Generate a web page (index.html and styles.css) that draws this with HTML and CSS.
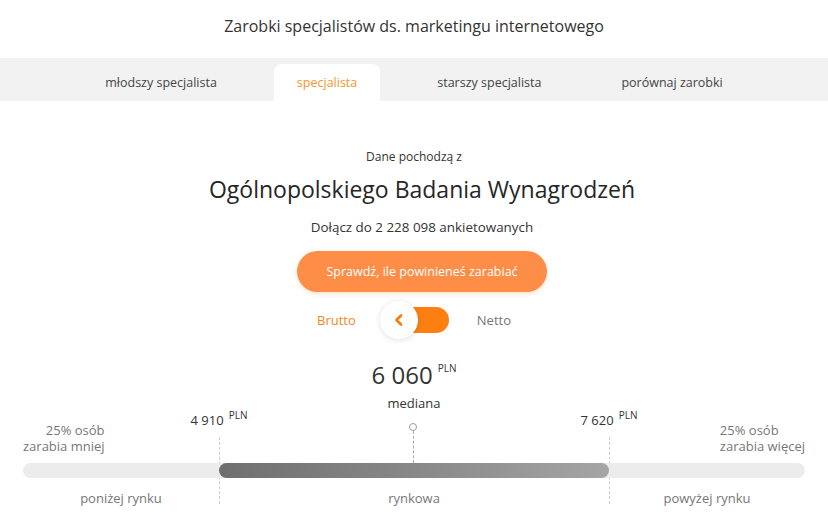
FILE: index.html
```html
<!DOCTYPE html>
<html lang="pl">
<head>
<meta charset="utf-8">
<link rel="stylesheet" href="styles.css">
</head>
<body>
<header class="header">
  <h1 class="title">Zarobki specjalistów ds. marketingu internetowego</h1>
</header>
<nav class="tabs">
  <div class="tab">młodszy specjalista</div>
  <div class="tab active">specjalista</div>
  <div class="tab">starszy specjalista</div>
  <div class="tab">porównaj zarobki</div>
</nav>
<main class="content">
  <p class="source-intro">Dane pochodzą z</p>
  <p class="source-name">Ogólnopolskiego Badania Wynagrodzeń</p>
  <p class="join">Dołącz do 2 228 098 ankietowanych</p>
  <div class="cta-wrap"><button class="cta">Sprawdź, ile powinieneś zarabiać</button></div>
  <div class="toggle-row">
    <span class="toggle-label on">Brutto</span>
    <div class="toggle">
      <div class="toggle-track"></div>
      <div class="toggle-knob">
        <svg width="14" height="14" viewBox="0 0 14 14"><path d="M9 2.5 L4.5 7 L9 11.5" fill="none" stroke="#f57f17" stroke-width="2.8" stroke-linecap="round" stroke-linejoin="round"/></svg>
      </div>
    </div>
    <span class="toggle-label">Netto</span>
  </div>
  <div class="median">
    <div class="median-value">6 060<sup>PLN</sup></div>
    <div class="median-label">mediana</div>
  </div>
  <div class="chart">
    <div class="side-label left">25% osób<br>zarabia mniej</div>
    <div class="median-marker"><span class="dot"></span><span class="stem"></span></div>
    <div class="side-label right">25% osób<br>zarabia więcej</div>
    <div class="bar">
      <div class="bar-mid"></div>
    </div>
    <div class="zone">poniżej rynku</div>
    <div class="zone">rynkowa</div>
    <div class="zone">powyżej rynku</div>
    <div class="quartile q1"><span class="qv">4 910<sup>PLN</sup></span><span class="qline"></span></div>
    <div class="quartile q3"><span class="qv">7 620<sup>PLN</sup></span><span class="qline"></span></div>
  </div>
</main>
</body>
</html>
```
FILE: styles.css
```css
* { box-sizing: border-box; }
html, body { margin: 0; padding: 0; background: #fff; }
body {
  font-family: "Open Sans", "Noto Sans", sans-serif;
  color: #333;
  width: 828px;
}
.header { height: 58px; padding-top: 13px; }
.title {
  margin: 0;
  font-size: 16px;
  font-weight: 400;
  line-height: 26px;
  text-align: center;
  color: #333;
}
.tabs {
  height: 43px;
  background: #f2f2f2;
  display: flex;
  justify-content: center;
  align-items: flex-end;
  gap: 34px;
}
.tab {
  height: 37px;
  padding: 0 23px;
  display: flex;
  align-items: center;
  font-size: 12.5px;
  color: #444;
  border-radius: 8px 8px 0 0;
}
.tab.active { background: #fff; color: #f7932f; }
.content { display: flex; flex-direction: column; align-items: center; }
.source-intro { margin: 46px 0 0; font-size: 12px; line-height: 20px; color: #333; }
.source-name { margin: 8px 0 0 16px; font-size: 23px; line-height: 28px; color: #262626; }
.join { margin: 14px 0 0 16px; font-size: 13.4px; line-height: 20px; color: #333; }
.cta-wrap { margin-top: 14px; padding-left: 16px; }
.cta {
  width: 250px;
  height: 41px;
  border: 0;
  border-radius: 21px;
  background: #fd8d47;
  color: #fff;
  font-family: inherit;
  font-size: 12.5px;
  box-shadow: 0 2px 4px rgba(253, 141, 71, 0.25);
}
.toggle-row {
  margin-top: 8px;
  display: flex;
  align-items: center;
  height: 40px;
}
.toggle-label { font-size: 13px; color: #777; }
.toggle-label.on { color: #f0891f; }
.toggle { position: relative; width: 70px; height: 40px; margin: 0 27px 0 24px; }
.toggle-track {
  position: absolute;
  left: 6px; top: 7px;
  width: 63px; height: 26px;
  border-radius: 13px;
  background: #fd7f12;
}
.toggle-knob {
  position: absolute;
  left: 0; top: 1px;
  width: 38px; height: 38px;
  border-radius: 50%;
  background: #fff;
  box-shadow: 0 1px 6px rgba(0,0,0,0.12);
  display: flex; align-items: center; justify-content: center;
}
.median { margin-top: 20px; display: flex; flex-direction: column; align-items: center; }
.median-value { font-size: 24px; line-height: 30px; color: #333; }
.median-value sup, .qv sup { font-size: 10px; margin-left: 5px; vertical-align: 0; position: relative; }
.median-value sup { top: -12px; }
.median-label { margin-top: -1px; font-size: 13px; line-height: 18px; color: #333; }
.chart {
  position: relative;
  width: 782px;
  display: grid;
  grid-template-columns: 196px 390px 196px;
  grid-template-rows: 51px 15px 41px;
}
.side-label { font-size: 13px; line-height: 16px; color: #777; align-self: start; padding-top: 10px; }
.side-label.left { justify-self: start; text-align: right; }
.side-label.right { justify-self: end; text-align: left; }
.median-marker {
  display: flex; flex-direction: column; align-items: center;
  padding-top: 11px; margin-left: -2px;
}
.dot { width: 8px; height: 8px; border: 1px solid #999; border-radius: 50%; flex: none; }
.stem { width: 0; height: 32px; border-left: 1px dashed #aaa; }
.bar {
  grid-column: 1 / 4;
  height: 15px;
  border-radius: 8px;
  background: #ececec;
  display: grid;
  grid-template-columns: 196px 390px 196px;
  position: relative;
  z-index: 1;
}
.bar-mid {
  grid-column: 2;
  border-radius: 8px;
  background: linear-gradient(90deg, #6f6f6f 0%, #888 50%, #a5a5a5 100%);
}
.zone {
  font-size: 13px; line-height: 18px; color: #777;
  text-align: center; padding-top: 11px;
}
.quartile {
  position: absolute;
  top: -1px;
  width: 0;
  height: 93px;
  display: flex; flex-direction: column; align-items: center;
  pointer-events: none;
}
.q1 { left: 196px; }
.q3 { left: 586px; }
.qv { white-space: nowrap; font-size: 13px; line-height: 18px; color: #333; }
.qv sup { top: -6px; }
.qline { margin-top: 7px; flex: 1; border-left: 1px dashed #ccc; margin-left: 1px; }
```
